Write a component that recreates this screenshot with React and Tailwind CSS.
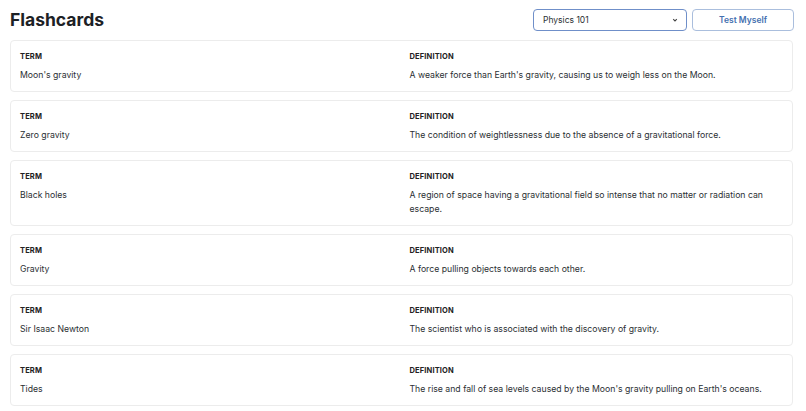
import React from "react";

const cards = [
  ["Moon's gravity", "A weaker force than Earth's gravity, causing us to weigh less on the Moon."],
  ["Zero gravity", "The condition of weightlessness due to the absence of a gravitational force."],
  ["Black holes", "A region of space having a gravitational field so intense that no matter or radiation can escape."],
  ["Gravity", "A force pulling objects towards each other."],
  ["Sir Isaac Newton", "The scientist who is associated with the discovery of gravity."],
  ["Tides", "The rise and fall of sea levels caused by the Moon's gravity pulling on Earth's oceans."],
];

export default function App() {
  return (
    <div className="min-h-[411px] bg-white px-[10px] pt-[9px] text-[#2b2f33]" style={{ fontFamily: "Inter, 'Noto Sans', sans-serif" }}>
      <div className="flex items-center justify-between h-[22px] mb-[9px]">
        <h1 className="text-[17.5px] font-bold text-[#1d2125] leading-none">Flashcards</h1>
        <div className="flex items-center gap-[5px] pr-[2px]">
          <div className="w-[154px] h-[22px] rounded-[4px] border border-[#6f8fc9] flex items-center justify-between pl-[9px] pr-[8px] text-[8.5px] text-[#2b2f33]">
            <span>Physics 101</span>
            <svg width="6" height="6" viewBox="0 0 10 10" fill="none" stroke="#444" strokeWidth="1.8">
              <path d="M2 3.5 L5 6.5 L8 3.5" />
            </svg>
          </div>
          <button className="w-[102px] h-[22px] rounded-[4px] border border-[#aabedd] text-[8.5px] font-semibold text-[#4470b0]">
            Test Myself
          </button>
        </div>
      </div>
      <div className="flex flex-col gap-[8px] pr-[3px]">
        {cards.map(([t, d]) => (
          <div key={t} className="rounded-[4px] border border-[#ececec] pl-[9px] pr-[10px] pt-[10px] pb-[9px] grid grid-cols-2 gap-x-[17px]">
            <div>
              <div className="text-[7.5px] font-bold tracking-[0.02em] leading-[12px] text-[#222]">TERM</div>
              <div className="text-[8.7px] leading-[14px] mt-[5px]">{t}</div>
            </div>
            <div>
              <div className="text-[7.5px] font-bold tracking-[0.02em] leading-[12px] text-[#222]">DEFINITION</div>
              <div className="text-[8.7px] leading-[14px] mt-[5px] pr-[8px]">{d}</div>
            </div>
          </div>
        ))}
      </div>
    </div>
  );
}
